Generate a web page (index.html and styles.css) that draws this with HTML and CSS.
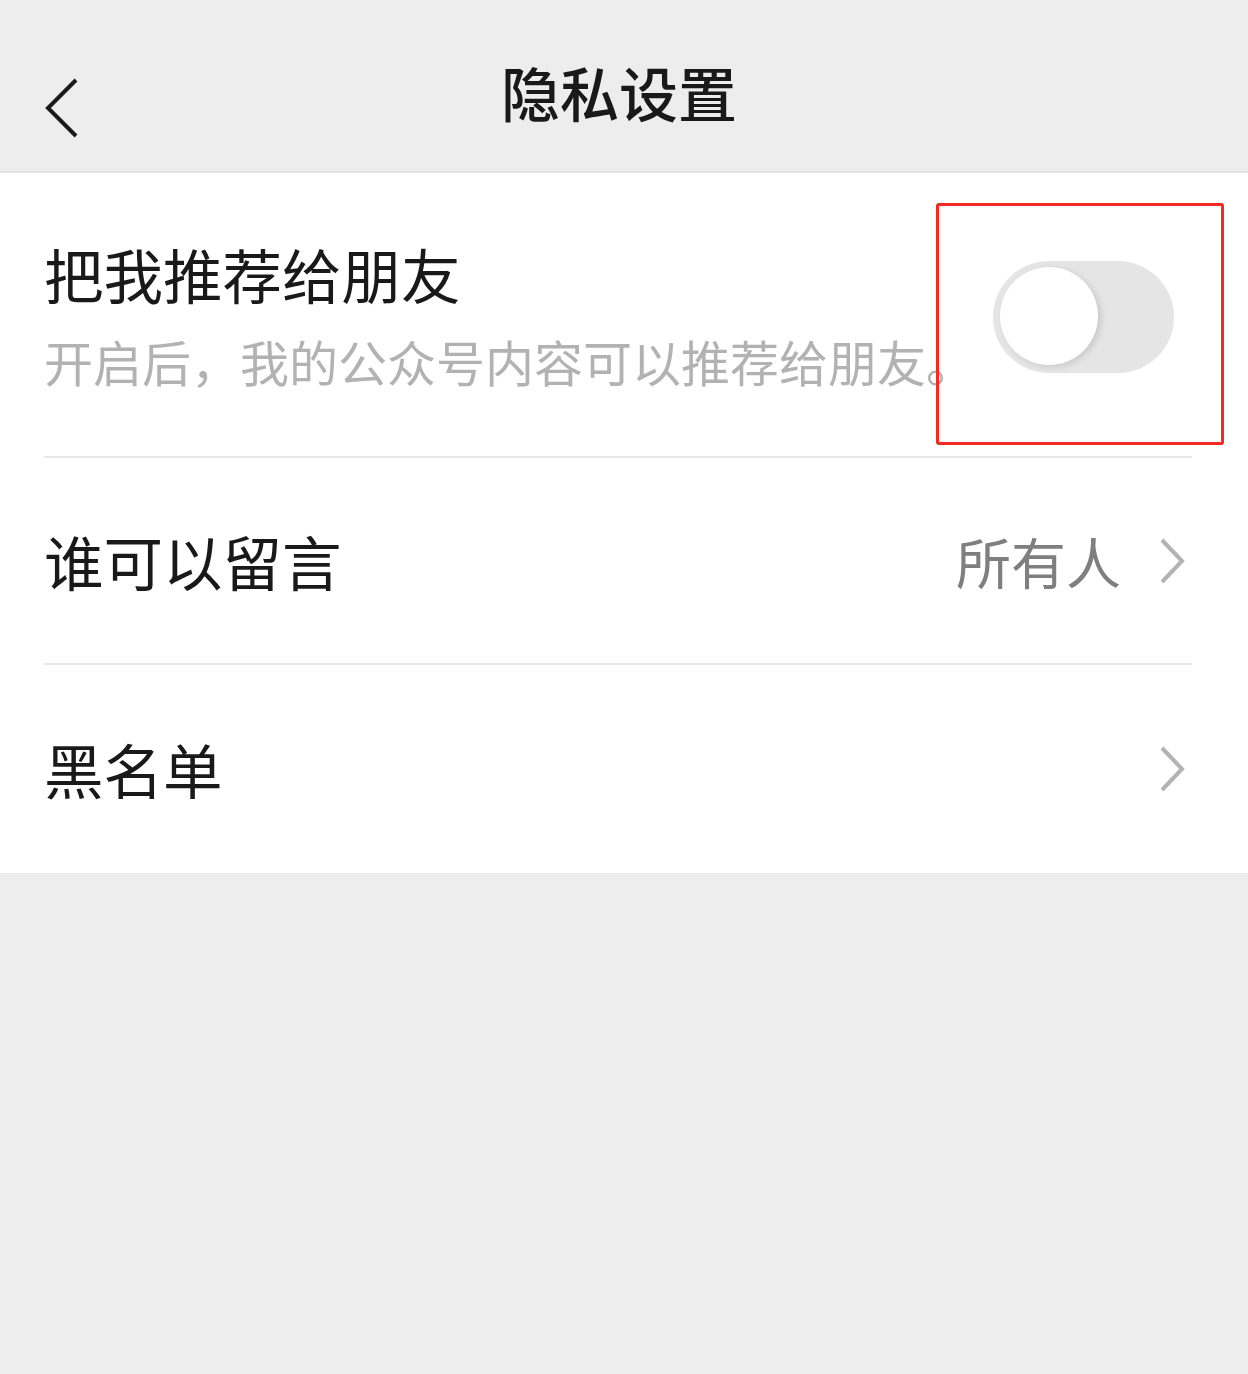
FILE: index.html
```html
<!DOCTYPE html>
<html lang="zh-CN">
<head>
<meta charset="utf-8">
<title>隐私设置</title>
<link rel="stylesheet" href="styles.css">
</head>
<body>
<header class="nav">
  <span class="back">
    <svg width="36" height="60" viewBox="0 0 36 60"><polyline points="32,2 4,30 32,58" fill="none" stroke="#1a1a1a" stroke-width="4"/></svg>
  </span>
  <h1 class="nav-title">隐私设置</h1>
</header>
<main class="list">
  <div class="cell">
    <div class="row row-switch">
      <div class="texts">
        <div class="label">把我推荐给朋友</div>
        <div class="desc">开启后，我的公众号内容可以推荐给朋友。</div>
      </div>
      <div class="switch"><span class="knob"></span></div>
    </div>
    <div class="highlight"></div>
  </div>
  <div class="cell">
    <div class="row row-link">
      <div class="label">谁可以留言</div>
      <div class="value">所有人</div>
      <svg class="arrow" width="26" height="46" viewBox="0 0 26 46"><polyline points="3,2 23,23 3,44" fill="none" stroke="#b3b3b3" stroke-width="4"/></svg>
    </div>
  </div>
  <div class="cell">
    <div class="row row-link row-last">
      <div class="label">黑名单</div>
      <svg class="arrow" width="26" height="46" viewBox="0 0 26 46"><polyline points="3,2 23,23 3,44" fill="none" stroke="#b3b3b3" stroke-width="4"/></svg>
    </div>
  </div>
</main>
</body>
</html>
```
FILE: styles.css
```css
html, body {
  margin: 0;
  padding: 0;
}
body {
  background: #ededed;
  font-family: "Noto Sans CJK SC", "Noto Sans", sans-serif;
  width: 1248px;
  min-height: 1374px;
}
.nav {
  position: relative;
  height: 171px;
  border-bottom: 2px solid #e4e4e4;
  display: flex;
  align-items: center;
  justify-content: center;
}
.back {
  position: absolute;
  left: 44px;
  top: 78px;
  display: block;
  line-height: 0;
}
.nav-title {
  margin: 12px 10px 0 0;
  font-size: 59px;
  font-weight: 500;
  color: #191919;
  line-height: 1;
}
.list {
  background: #fff;
}
.cell {
  position: relative;
  padding: 0 56px 0 44px;
}
.row {
  display: flex;
  align-items: center;
  border-bottom: 2px solid #e8e8e8;
  box-sizing: border-box;
}
.row-last {
  border-bottom: none;
}
.row-switch {
  height: 285px;
}
.row-link {
  height: 207px;
}
.row-last {
  height: 208px;
}
.texts {
  flex: 1;
  min-width: 0;
  white-space: nowrap;
}
.label {
  font-size: 59.5px;
  line-height: 1;
  color: #191919;
  flex: 1;
}
.row-switch .label {
  margin-bottom: 33px;
}
.desc {
  font-size: 49px;
  line-height: 1;
  color: #b2b2b2;
}
.switch {
  position: relative;
  flex: none;
  width: 181px;
  height: 112px;
  border-radius: 56px;
  background: #e5e5e5;
  margin-right: 18px;
  margin-top: 4px;
}
.knob {
  position: absolute;
  left: 7px;
  top: 6px;
  width: 98px;
  height: 98px;
  border-radius: 50%;
  background: #fff;
  box-shadow: 3px 2px 6px rgba(0, 0, 0, 0.12);
}
.value {
  font-size: 55px;
  line-height: 1;
  color: #7f7f7f;
  margin-right: 38px;
}
.arrow {
  flex: none;
  margin-right: 7px;
}
.highlight {
  position: absolute;
  left: 936px;
  top: 30px;
  width: 282px;
  height: 236px;
  border: 3px solid #f52a22;
  border-radius: 3px;
}
```
